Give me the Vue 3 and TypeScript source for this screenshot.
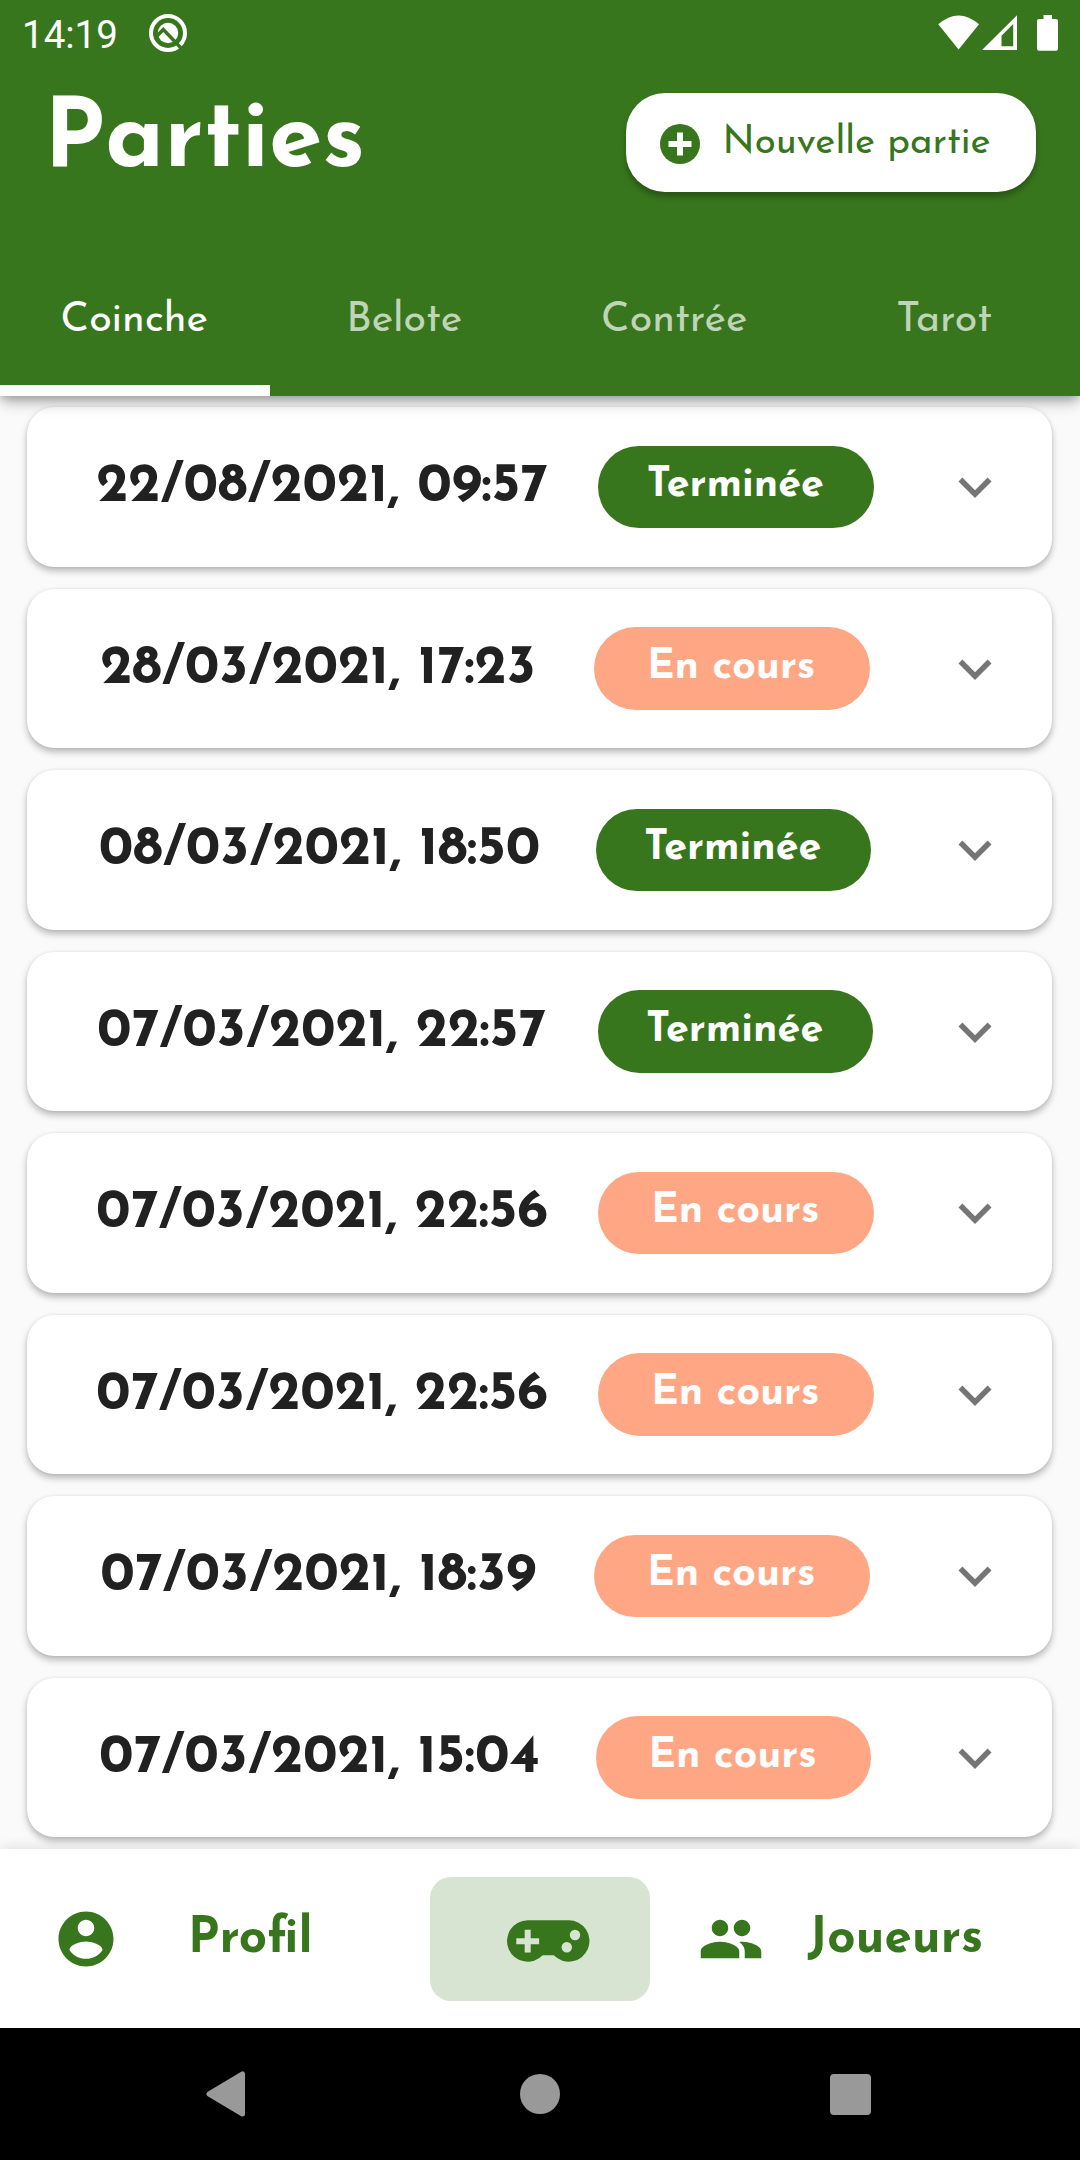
<script setup lang="ts">
interface Game {
  date: string
  done: boolean
}

const tabs = ['Coinche', 'Belote', 'Contrée', 'Tarot']

const games: Game[] = [
  { date: '22/08/2021, 09:57', done: true },
  { date: '28/03/2021, 17:23', done: false },
  { date: '08/03/2021, 18:50', done: true },
  { date: '07/03/2021, 22:57', done: true },
  { date: '07/03/2021, 22:56', done: false },
  { date: '07/03/2021, 22:56', done: false },
  { date: '07/03/2021, 18:39', done: false },
  { date: '07/03/2021, 15:04', done: false },
]
</script>

<template>
  <div class="screen">
    <header class="header">
      <div class="status">
        <span class="clock">14:19</span>
        <svg viewBox="0 0 38 38" width="38" height="38">
          <circle cx="19" cy="19" r="17" fill="none" stroke="#fff" stroke-width="4" />
          <circle cx="19" cy="19" r="10.2" fill="#fff" />
          <path d="M7.500 22.500L14.300 15.500L33 35" fill="none" stroke="#38761d" stroke-width="3.400" />
        </svg>
        <svg class="signals" viewBox="938 14 121 38" width="121" height="38">
          <path d="M938.3 24.3Q958.6 6.500 979 24.300L958.600 49.500Z" fill="#fff" />
          <path fill-rule="evenodd" d="M982 50L1017 15.200V50ZM1001.500 46.300H1013.200V24L1001.500 35.700Z" fill="#fff" />
          <path d="M1043.500 15h8.500v4h4a2 2 0 0 1 2 2v27.800a2 2 0 0 1-2 2h-17a2 2 0 0 1-2-2V21a2 2 0 0 1 2-2h4.500z" fill="#fff" />
        </svg>
      </div>
      <div class="bar">
        <h1 class="title">Parties</h1>
        <button class="new">
          <svg viewBox="0 0 40 40" width="40" height="40">
            <circle cx="20" cy="20" r="20" fill="#38761d" />
            <path d="M20 8.500v23M8.500 20h23" stroke="#fff" stroke-width="6" />
          </svg>
          <span>Nouvelle partie</span>
        </button>
      </div>
      <nav class="tabs">
        <div v-for="(tab, i) in tabs" :key="tab" class="tab" :class="{ active: i === 0 }">{{ tab }}</div>
      </nav>
    </header>

    <main class="list">
      <article v-for="(game, i) in games" :key="i" class="card">
        <div class="summary">
          <span class="date">{{ game.date }}</span>
          <span class="pill" :class="{ done: game.done }">{{ game.done ? 'Terminée' : 'En cours' }}</span>
        </div>
        <svg class="chevron" viewBox="0 0 24 24" width="66" height="66">
          <path d="M16.590 8.590L12 13.170 7.410 8.590 6 10l6 6 6-6z" fill="#757575" />
        </svg>
      </article>
    </main>

    <nav class="bottom">
      <div class="item profile">
        <svg viewBox="0 0 24 24" width="66" height="66">
          <path fill="#38761d" d="M12 2C6.480 2 2 6.480 2 12s4.480 10 10 10 10-4.480 10-10S17.520 2 12 2zm0 3c1.660 0 3 1.340 3 3s-1.340 3-3 3-3-1.340-3-3 1.340-3 3-3zm0 14.200c-2.500 0-4.710-1.280-6-3.220.03-1.990 4-3.080 6-3.080 1.990 0 5.970 1.090 6 3.080-1.290 1.940-3.500 3.220-6 3.220z" />
        </svg>
        <span>Profil</span>
      </div>
      <div class="item games">
        <svg viewBox="0 0 83 42" width="83" height="42">
          <path fill="#38761d" d="M20.700 .3H61.700A20.700 20.700 0 1 1 46.800 35.300H35.700A20.700 20.700 0 1 1 20.700 .3Z" />
          <path d="M20.700 9.800v22.700M9.300 21.200h22.800" stroke="#d7e4d2" stroke-width="6" />
          <circle cx="68" cy="15" r="5.200" fill="#d7e4d2" />
          <circle cx="59.800" cy="27.300" r="5.200" fill="#d7e4d2" />
        </svg>
      </div>
      <div class="item players">
        <svg viewBox="0 0 24 24" width="66" height="66">
          <path fill="#38761d" d="M16 11c1.660 0 2.990-1.340 2.990-3S17.660 5 16 5c-1.660 0-3 1.340-3 3s1.340 3 3 3zm-8 0c1.660 0 2.990-1.340 2.990-3S9.660 5 8 5C6.340 5 5 6.340 5 8s1.340 3 3 3zm0 2c-2.330 0-7 1.170-7 3.500V19h14v-2.500c0-2.330-4.670-3.500-7-3.500zm8 0c-.29 0-.62.02-.97.05 1.160.84 1.970 1.970 1.970 3.450V19h6v-2.500c0-2.330-4.670-3.500-7-3.500z" />
        </svg>
        <span>Joueurs</span>
      </div>
    </nav>

    <footer class="system">
      <svg viewBox="0 0 40 46" width="40" height="46">
        <path d="M3 23L36.500 3V43Z" fill="#999" stroke="#999" stroke-width="5" stroke-linejoin="round" />
      </svg>
      <svg class="home" viewBox="0 0 40 40" width="40" height="40"><circle cx="20" cy="20" r="20" fill="#999" /></svg>
      <svg viewBox="0 0 41 41" width="41" height="41"><rect width="41" height="41" rx="4" fill="#999" /></svg>
    </footer>
  </div>
</template>

<style>
body {
  margin: 0;
}
</style>

<style scoped>
.screen {
  display: flex;
  flex-direction: column;
  width: 1080px;
  height: 2160px;
  overflow: hidden;
  background: #fafafa;
  font-family: 'Josefin Sans', Lato, sans-serif;
  line-height: 1;
  white-space: nowrap;
}
svg {
  display: block;
  flex: none;
}
.header {
  position: relative;
  z-index: 2;
  flex: none;
  height: 396px;
  display: flex;
  flex-direction: column;
  background: #38761d;
  color: #fff;
  box-shadow: 0 8px 14px -2px rgba(0, 0, 0, 0.28), 0 3px 8px rgba(0, 0, 0, 0.16);
}
.status {
  display: flex;
  align-items: center;
  box-sizing: border-box;
  height: 66px;
  padding: 0 21px 0 22px;
}
.clock {
  width: 127px;
  font: 38.500px/66px Roboto, sans-serif;
  padding-top: 3px;
}
.signals {
  margin-left: auto;
}
.bar {
  display: flex;
  align-items: center;
  justify-content: space-between;
  height: 154px;
  margin-bottom: 35px;
  padding: 0 44px;
}
.title {
  margin: -2px 0 0;
  font-size: 96.250px;
  font-weight: 700;
}
.new {
  display: flex;
  align-items: center;
  box-sizing: border-box;
  width: 410px;
  height: 99px;
  margin-top: -1px;
  padding: 3px 0 0 34px;
  gap: 22.500px;
  border: 0;
  border-radius: 39px;
  background: #fff;
  color: #38761d;
  font: 38.500px/1 'Josefin Sans', Lato, sans-serif;
  box-shadow: 0 5px 6px rgba(0, 0, 0, 0.28);
}
.new span {
  margin-top: 1px;
}
.tabs {
  display: grid;
  grid-template-columns: repeat(4, 1fr);
  flex: 1;
}
.tab {
  display: flex;
  justify-content: center;
  box-sizing: border-box;
  padding: 45px 1.500px 0 0;
  border-bottom: 11px solid transparent;
  color: rgba(255, 255, 255, 0.7);
  font-size: 41.250px;
}
.tab.active {
  color: #fff;
  border-color: #fff;
}
.list {
  flex: none;
  box-sizing: border-box;
  height: 1453px;
  padding: 11px 28px 0 27px;
  display: flex;
  flex-direction: column;
  gap: 22px;
}
.card {
  display: flex;
  align-items: center;
  flex: none;
  height: 159.500px;
  border-radius: 27.500px;
  background: #fff;
  box-shadow: 0 4px 7px rgba(0, 0, 0, 0.27), 0 0 3px rgba(0, 0, 0, 0.07);
}
.summary {
  display: flex;
  align-items: center;
  justify-content: space-around;
  width: 828px;
  margin-left: 44px;
}
.date {
  margin-top: 1.600px;
  color: #212121;
  font-size: 55px;
  font-weight: 700;
}
.pill {
  box-sizing: border-box;
  width: 275.500px;
  height: 82.500px;
  border-radius: 42px;
  padding: 19.500px 1.500px 0 0;
  background: #ffa785;
  color: #fff;
  font-size: 41.250px;
  font-weight: 700;
  text-align: center;
}
.pill.done {
  background: #38761d;
}
.chevron {
  margin: 0.600px 44px 0 auto;
}
.bottom {
  position: relative;
  z-index: 1;
  display: flex;
  flex: none;
  align-items: center;
  height: 179px;
  background: #fff;
  box-shadow: 0 -2px 12px rgba(0, 0, 0, 0.1);
  color: #38761d;
  font-size: 49.500px;
  font-weight: 700;
}
.item {
  display: flex;
  align-items: center;
}
.item span {
  margin-top: 2px;
}
.profile {
  width: 377.500px;
  padding-left: 52.500px;
  gap: 69.500px;
}
.games {
  justify-content: center;
  box-sizing: border-box;
  width: 220px;
  height: 124px;
  padding: 5px 0 0 17px;
  border-radius: 21px;
  background: #d7e4d2;
}
.players {
  padding-left: 47.500px;
  gap: 44px;
}
.system {
  display: flex;
  align-items: center;
  height: 132px;
  padding-left: 206px;
  background: #000;
}
.home {
  margin: 0 270px 0 274px;
}
</style>
